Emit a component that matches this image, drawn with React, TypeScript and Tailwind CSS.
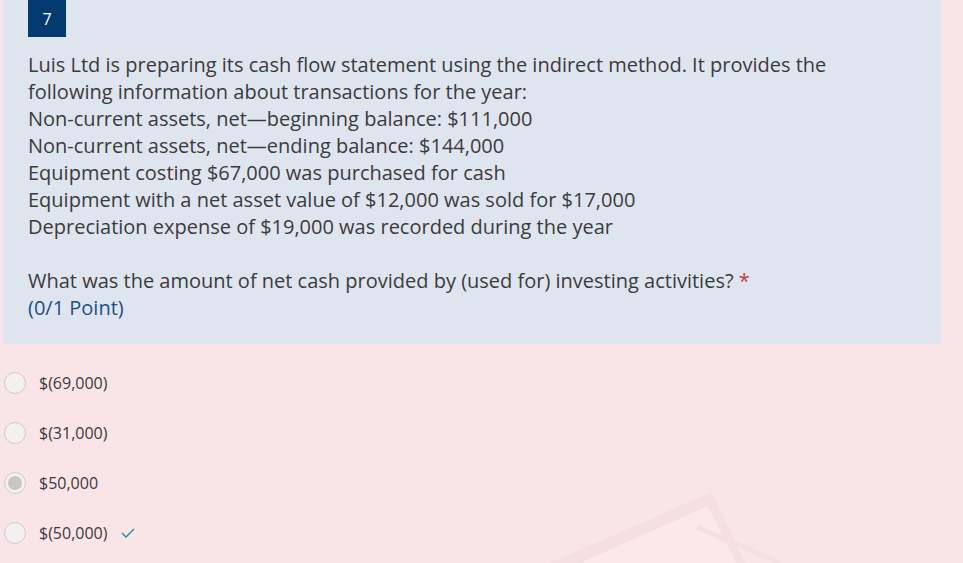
import React from "react";

const font = { fontFamily: '"Open Sans", "Noto Sans", sans-serif' };

function Radio({ checked }: { checked?: boolean }) {
  return (
    <span className="flex h-[22px] w-[22px] shrink-0 items-center justify-center rounded-full border border-[#cfcacc] bg-[#f4eff0]">
      {checked && <span className="h-[14px] w-[14px] rounded-full bg-[#c9c5c7]" />}
    </span>
  );
}

export default function App() {
  const options = [
    { label: "$(69,000)" },
    { label: "$(31,000)" },
    { label: "$50,000", checked: true },
    { label: "$(50,000)", correct: true },
  ];
  return (
    <div className="relative h-[563px] w-[963px] overflow-hidden bg-[#f9e4e7] text-[#3b3b3b]" style={font}>
      <svg className="absolute left-0 top-0" width="963" height="563" viewBox="0 0 963 563">
        <polygon points="550,563 712,492 745,563" fill="#f5dfe0" />
        <polygon points="580,563 708,506 736,563" fill="#fce8e8" />
        <line x1="697" y1="527" x2="780" y2="563" stroke="#f5dfe0" strokeWidth="5" />
      </svg>
      <div className="relative pl-[3px]">
        <div className="h-[344px] w-[938px] bg-[#dfe5ef] pl-[25px]">
          <div className="flex h-[37px] w-[38px] items-center justify-center bg-[#033a70] text-[16px] text-white">7</div>
          <div className="pt-[14px] text-[20px] leading-[27px]">
            <div>Luis Ltd is preparing its cash flow statement using the indirect method. It provides the</div>
            <div>following information about transactions for the year:</div>
            <div>Non-current assets, net—beginning balance: $111,000</div>
            <div>Non-current assets, net—ending balance: $144,000</div>
            <div>Equipment costing $67,000 was purchased for cash</div>
            <div>Equipment with a net asset value of $12,000 was sold for $17,000</div>
            <div>Depreciation expense of $19,000 was recorded during the year</div>
            <div className="h-[27px]" />
            <div>
              What was the amount of net cash provided by (used for) investing activities?{" "}
              <span className="text-[#c23a3a]">*</span>
            </div>
            <div className="text-[#1d4f80]">(0/1 Point)</div>
          </div>
        </div>
        <div className="flex flex-col pt-[14px]">
          {options.map((o, i) => (
            <div key={i} className="flex h-[50px] items-center pl-[1px]">
              <Radio checked={o.checked} />
              <span className="ml-[13px] text-[16px] text-[#3b3b3b]">{o.label}</span>
              {o.correct && (
                <svg className="ml-[14px]" width="14" height="10" viewBox="0 0 14 10">
                  <path d="M1 5 L5 9 L13 1" fill="none" stroke="#1e8c96" strokeWidth="1.3" />
                </svg>
              )}
            </div>
          ))}
        </div>
      </div>
    </div>
  );
}
